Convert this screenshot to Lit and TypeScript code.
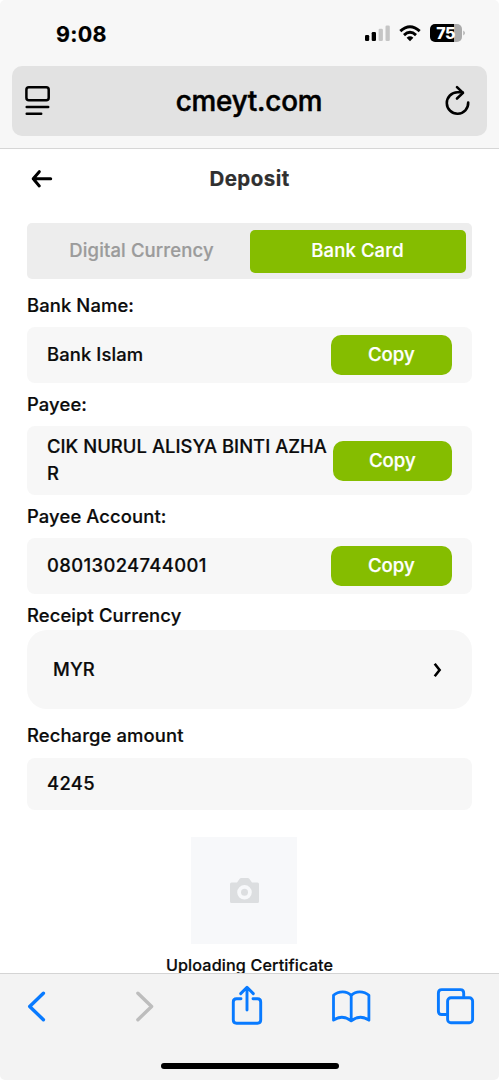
import { LitElement, html, css, svg } from "lit";
import { customElement, property } from "lit/decorators.js";

@customElement("copy-field")
class CopyField extends LitElement {
  @property() value = "";
  static styles = css`
    :host { display: flex; align-items: center; box-sizing: border-box; padding: 0 20px; background: #f7f7f7; border-radius: 8px; }
    .value { flex: 1; min-width: 0; word-break: break-all; line-height: 27px; padding-bottom: 2px; font-size: 18.4px; letter-spacing: var(--track, 0.12px); }
    .copy { box-sizing: border-box; width: var(--copy-width, 121.5px); height: 40px; flex: none; padding: 0 0 2px; border: 0; border-radius: 10px; background: #85bd00; color: #fff; font: 500 18.6px Inter, sans-serif; letter-spacing: 0; -webkit-text-stroke: 0.25px; }
  `;
  render() {
    return html`<span class="value">${this.value}</span><button class="copy">Copy</button>`;
  }
}

@customElement("app-root")
class AppRoot extends LitElement {
  static styles = css`
    :host { display: flex; flex-direction: column; height: 1080px; width: 499px; overflow: hidden; background: #fff; color: #0b0b0b; font: 500 18.4px Inter, sans-serif; letter-spacing: 0.12px; -webkit-text-stroke: 0.2px; }
    svg { display: block; flex: none; overflow: visible; }
    .top { box-sizing: border-box; flex: none; height: 149px; background: #f7f7f7; border-bottom: 1px solid #d6d6d6; border-radius: 5px 5px 0 0; color: #000; }
    .status { height: 66px; display: flex; align-items: center; justify-content: space-between; padding: 0 34px 0 56px; }
    .time { font-size: 21.5px; font-weight: 700; letter-spacing: 0.3px; padding-top: 1px; }
    .indicators { width: 101px; height: 20px; }
    .address { margin: 0 12px; height: 70px; box-sizing: border-box; display: flex; align-items: center; justify-content: space-between; padding: 0 17px 0 13px; background: #e2e2e2; border-radius: 10px; }
    .domain { font-size: 27.8px; letter-spacing: -0.2px; padding: 0 0 0 3px; -webkit-text-stroke: 0.5px; }
    .nav { flex: none; height: 59px; display: grid; grid-template-columns: 27px 1fr 27px; align-items: center; padding: 0 30px; }
    .title { text-align: center; font-size: 20.5px; font-weight: 700; letter-spacing: 0.45px; color: #303030; padding-bottom: 1px; }
    .content { flex: 1; min-height: 0; overflow: hidden; padding: 15px 27px 0; }
    .tabs { box-sizing: border-box; height: 56px; display: grid; grid-template-columns: 1fr 1fr; padding: 6.5px; background: #ededed; border-radius: 5px; }
    .tab { display: flex; align-items: center; justify-content: center; color: #9b9b9b; font-size: 18.5px; padding-bottom: 2px; }
    .tab.on { color: #fff; background: #85bd00; border-radius: 5px; }
    .label { display: flex; align-items: center; box-sizing: border-box; white-space: nowrap; }
    .name { height: 48px; padding-top: 4px; }
    .payee { height: 43px; padding-bottom: 2px; }
    .account { height: 43px; padding-bottom: 2px; }
    .receipt { height: 36px; padding-top: 6px; }
    .amount { height: 49px; padding-top: 3px; }
    .h56 { height: 56px; }
    .h69 { height: 69px; --copy-width: 119.5px; --track: 0.05px; }
    .digits { --track: 0.38px; }
    .select { box-sizing: border-box; height: 79px; display: flex; align-items: center; justify-content: space-between; padding: 0 30px 0 26px; background: #f7f7f7; border-radius: 20px; }
    .select span { padding-bottom: 2px; }
    .input { box-sizing: border-box; height: 52px; display: flex; align-items: center; padding: 0 0 1.5px 20px; background: #f7f7f7; border-radius: 8px; letter-spacing: 0.38px; }
    .upload { display: flex; flex-direction: column; align-items: center; padding-top: 27px; }
    .photo { width: 106px; height: 107px; margin-right: 11px; display: grid; place-items: center; background: #f7f8fa; }
    .caption { font-size: 16.2px; line-height: 22px; margin-top: 10px; white-space: nowrap; }
    .toolbar { box-sizing: border-box; flex: none; height: 107px; display: flex; flex-direction: column; align-items: center; justify-content: space-between; border-top: 1px solid #d4d4d4; background: #f3f3f3; border-radius: 0 0 5px 5px; padding-bottom: 11px; }
    .actions { box-sizing: border-box; width: 100%; display: grid; grid-template-columns: 108px 96px 101px 105px 39px; padding: 11px 0 0 26px; height: 54px; }
    .home { width: 178px; height: 6px; border-radius: 3px; background: #000; }
  `;

  render() {
    return html`
      <header class="top">
        <div class="status">
          <span class="time">9:08</span>
          <svg class="indicators" viewBox="364 23 101 20">
            <rect x="365" y="35" width="4.2" height="6" rx="1.3"/>
            <rect x="371.7" y="32" width="4.3" height="9" rx="1.3"/>
            <rect x="378.6" y="28.7" width="4.3" height="12.3" rx="1.3" fill="#c5c5c5"/>
            <rect x="385.5" y="25.5" width="4.3" height="15.5" rx="1.3" fill="#c5c5c5"/>
            <g fill="none" stroke="#000" stroke-width="2.9">
              <path d="M400.3 31.1Q410 22.6 419.7 31.1"/>
              <path d="M404 35.1Q410 29.6 416 35.1"/>
            </g>
            <path d="M406.6 37.7Q410 34.9 413.4 37.7L410 41.2Z"/>
            <path d="M435 24h19v18h-19a5 5 0 0 1-5-5v-8a5 5 0 0 1 5-5Z"/>
            <path d="M454 24h3a5 5 0 0 1 5 5v8a5 5 0 0 1-5 5h-3Z" fill="#ababab"/>
            <path d="M463.3 30.5q3.2 2.5 0 5Z" fill="#ababab"/>
            <text x="445.7" y="39" text-anchor="middle" font-family="Inter, sans-serif" font-size="16" font-weight="800" letter-spacing="-.3" fill="#fff">75</text>
          </svg>
        </div>
        <div class="address">
          <svg width="25" height="30" viewBox="25 86 25 30" fill="none" stroke="#000" stroke-width="2.5" stroke-linecap="round">
            <rect x="26.4" y="87.3" width="22.3" height="13" rx="2.5"/><path d="M26.7 107h21.5M26.7 113.7h14.5"/>
          </svg>
          <span class="domain">cmeyt.com</span>
          <svg width="25" height="30" viewBox="445 85 25 30" fill="none" stroke="#000" stroke-width="2.6" stroke-linecap="round" stroke-linejoin="round">
            <path d="M468.2 101.5A10.7 10.7 0 1 1 457.5 91.3H462.5"/><path d="M457 86.1l6 5.8-6 5.6"/>
          </svg>
        </div>
      </header>
      <nav class="nav">
        <svg width="24" height="20" viewBox="30 169 24 20" fill="none" stroke="#000" stroke-width="3" stroke-linecap="round" stroke-linejoin="round"><path d="M50.7 178.8H33.2M39.3 171.7l-6.1 7.1 6.1 7.1"/></svg>
        <span class="title">Deposit</span>
      </nav>
      <main class="content">
        <div class="tabs"><div class="tab off">Digital Currency</div><div class="tab on">Bank Card</div></div>
        <div class="label name">Bank Name:</div>
        <copy-field class="h56" value="Bank Islam"></copy-field>
        <div class="label payee">Payee:</div>
        <copy-field class="h69" value="CIK NURUL ALISYA BINTI AZHAR"></copy-field>
        <div class="label account">Payee Account:</div>
        <copy-field class="h56 digits" value="08013024744001"></copy-field>
        <div class="label receipt">Receipt Currency</div>
        <div class="select"><span>MYR</span>
          <svg width="9" height="16" viewBox="433 662 9 16" fill="none" stroke="#000" stroke-width="2.6"><path d="M434.7 663.8l4.9 6.2-4.9 6.2"/></svg>
        </div>
        <div class="label amount">Recharge amount</div>
        <div class="input">4245</div>
        <div class="upload">
          <div class="photo">
            <svg width="29" height="26" viewBox="0 0 29 26"><path fill="#dcdee0" fill-rule="evenodd" d="M1.5 4.5H7L9.5 1q.7-1 1.8-1h6.4q1.1 0 1.8 1L22 4.5h5.5Q29 4.5 29 6v17.5q0 1.5-1.5 1.5h-26Q0 25 0 23.5V6q0-1.5 1.5-1.5ZM14.5 7a7.3 7.3 0 1 0 0 14.6 7.3 7.3 0 0 0 0-14.6Z"/><circle cx="14.5" cy="14.3" r="3.5" fill="#dcdee0"/></svg>
          </div>
          <div class="caption">Uploading Certificate</div>
        </div>
      </main>
      <footer class="toolbar">
        <div class="actions">${this.actions()}</div>
        <div class="home"></div>
      </footer>`;
  }

  actions() {
    const icon = (x: number, w: number, color: string, width: number, body: unknown) => html`
      <svg width=${w} height="42" viewBox="${x} 985 ${w} 42" fill="none" stroke=${color} stroke-width=${width} stroke-linecap="round" stroke-linejoin="round">${body}</svg>`;
    return [
      icon(26, 21, "#087aff", 3.4, svg`<path d="M43.4 993.3L29.7 1006.5l13.7 13.2"/>`),
      icon(134, 21, "#bdbdbd", 3.4, svg`<path d="M137.9 993.3l13.7 13.2-13.7 13.2"/>`),
      icon(230, 33, "#087aff", 2.9, svg`<path d="M241 998.7h-4.5q-3.2 0-3.2 3.2v18.2q0 3.2 3.2 3.2h21q3.2 0 3.2-3.2v-18.2q0-3.2-3.2-3.2H253M247 1010V988M240.7 993.6l6.3-6.3 6.3 6.3"/>`),
      icon(331, 41, "#087aff", 2.8, svg`<path d="M351.2 995.5q-3.5-3.7-8.5-3.7-5.5 0-9.2 3.5v24.9q8.8-6.2 17.7.7 8.9-6.9 17.7-.7v-24.9q-3.7-3.5-9.2-3.5-5 0-8.5 3.7v24.9"/>`),
      icon(436, 39, "#087aff", 2.9, svg`<rect x="447.6" y="997.7" width="25" height="25" rx="3.3"/><path d="M446 1014.5h-4.3q-3.3 0-3.3-3.3v-18.3q0-3.3 3.3-3.3h18.7q3.3 0 3.3 3.3v3.3"/>`),
    ];
  }
}
